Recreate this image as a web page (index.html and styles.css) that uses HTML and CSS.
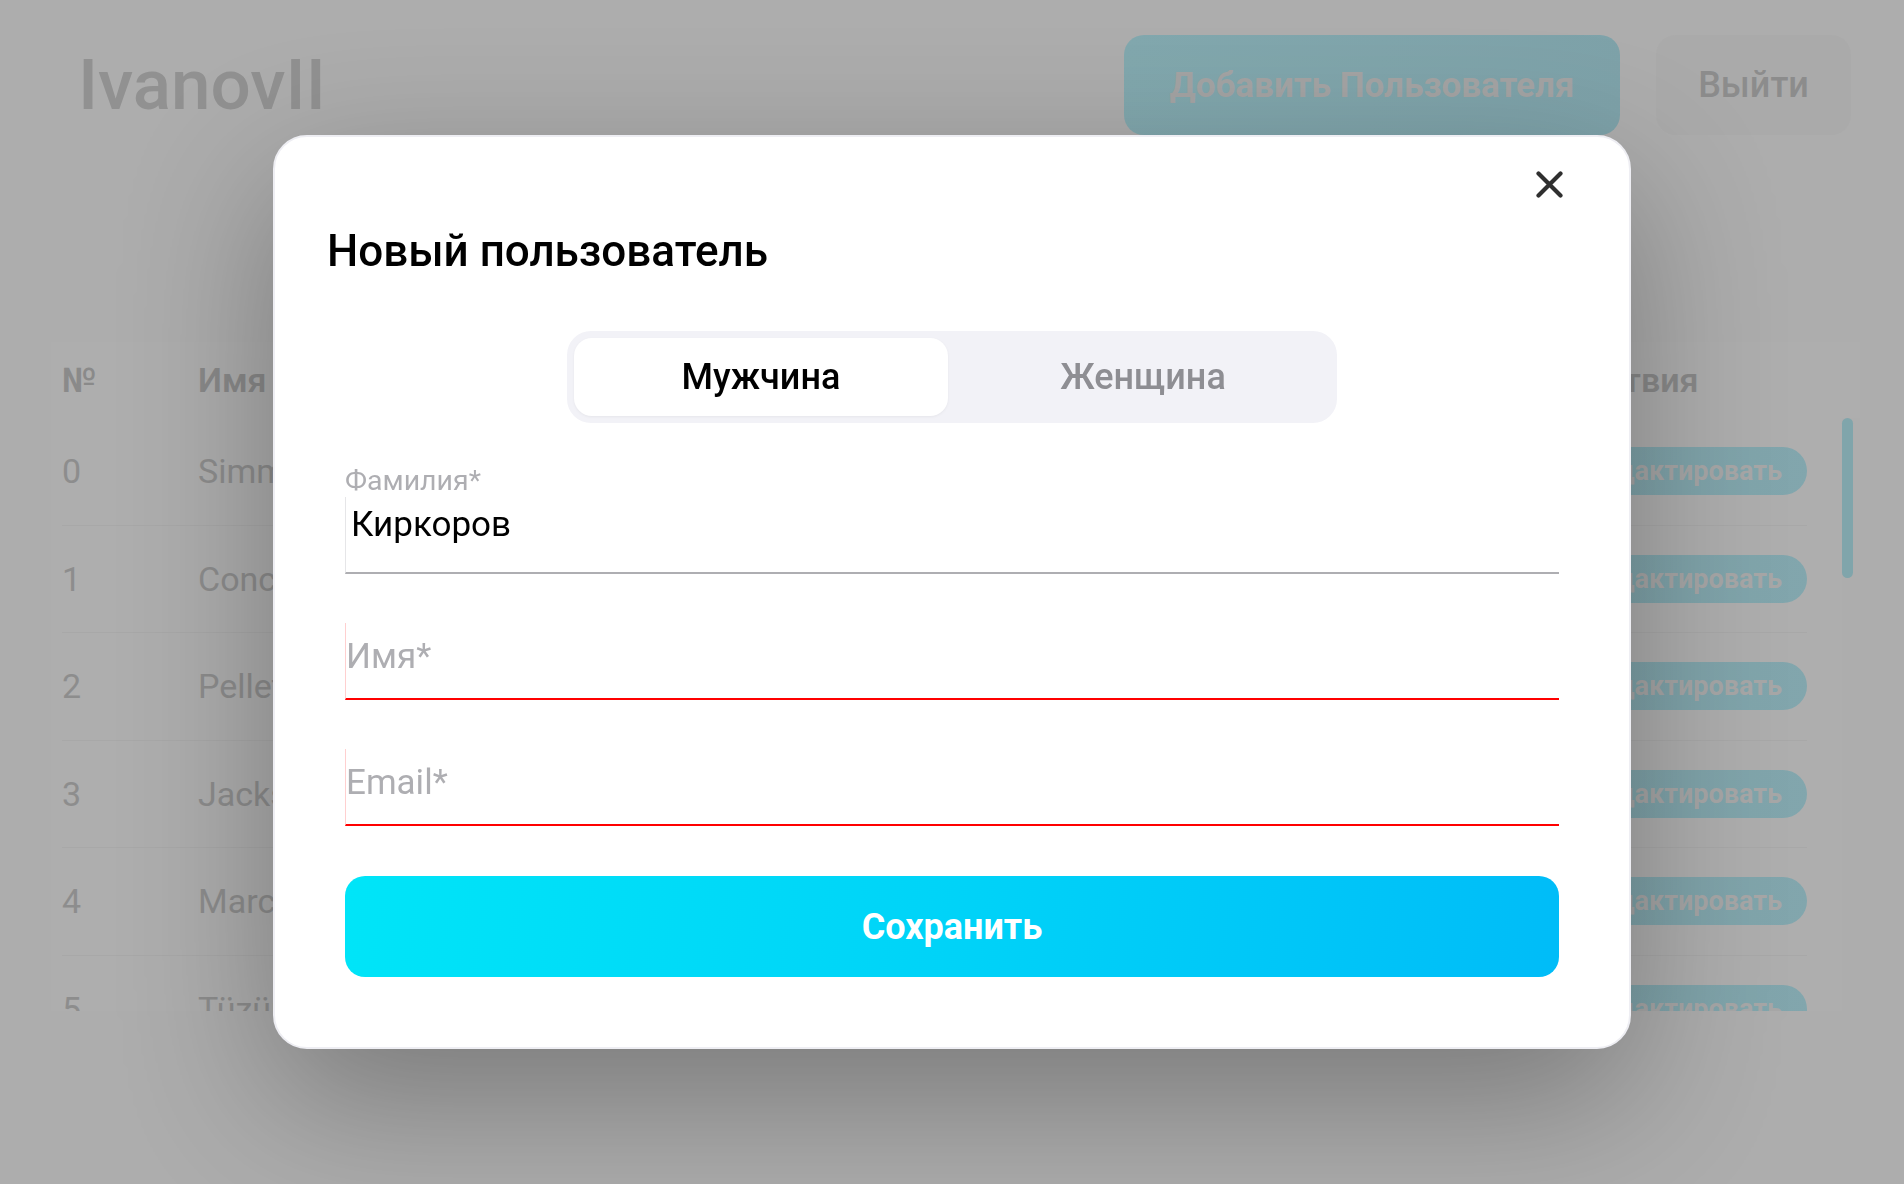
FILE: index.html
```html
<!DOCTYPE html>
<html lang="ru">
<head>
<meta charset="utf-8">
<title>Новый пользователь</title>
<link rel="stylesheet" href="styles.css">
</head>
<body>
<div class="page">
  <header class="topbar">
    <div class="logo">IvanovII</div>
    <div class="top-actions">
      <button class="btn-add">Добавить Пользователя</button>
      <button class="btn-logout">Выйти</button>
    </div>
  </header>

  <section class="table">
    <div class="thead">
      <div class="c-num">№</div>
      <div class="c-name">Имя</div>
      <div class="c-head-act">Действия</div>
    </div>
    <div class="tbody">
      <div class="rows">
        <div class="row"><div class="c-num">0</div><div class="c-name">Simmons</div><div class="c-act"><span class="btn-edit">Редактировать</span></div></div>
        <div class="row"><div class="c-num">1</div><div class="c-name">Concepcion</div><div class="c-act"><span class="btn-edit">Редактировать</span></div></div>
        <div class="row"><div class="c-num">2</div><div class="c-name">Pelletier</div><div class="c-act"><span class="btn-edit">Редактировать</span></div></div>
        <div class="row"><div class="c-num">3</div><div class="c-name">Jackson</div><div class="c-act"><span class="btn-edit">Редактировать</span></div></div>
        <div class="row"><div class="c-num">4</div><div class="c-name">Marcus</div><div class="c-act"><span class="btn-edit">Редактировать</span></div></div>
        <div class="row"><div class="c-num">5</div><div class="c-name">Tüzün</div><div class="c-act"><span class="btn-edit">Редактировать</span></div></div>
      </div>
      <div class="track"><div class="thumb"></div></div>
    </div>
  </section>
</div>

<div class="overlay">
  <div class="modal">
    <button class="close" aria-label="Закрыть">
      <svg width="27" height="27" viewBox="0 0 27 27"><path d="M2.5 2.5L24.5 24.5M24.5 2.5L2.5 24.5" stroke="#2f2f2f" stroke-width="4.2" stroke-linecap="round"/></svg>
    </button>
    <h2 class="title">Новый пользователь</h2>
    <div class="form">
      <div class="segmented">
        <div class="seg seg-active">Мужчина</div>
        <div class="seg">Женщина</div>
      </div>

      <div class="field field-first">
        <div class="label">Фамилия*</div>
        <input class="input input-filled" type="text" value="Киркоров">
      </div>
      <div class="field">
        <input class="input input-error" type="text" placeholder="Имя*">
      </div>
      <div class="field">
        <input class="input input-error" type="text" placeholder="Email*">
      </div>

      <button class="save">Сохранить</button>
    </div>
  </div>
</div>
</body>
</html>
```

FILE: styles.css
```css
* { box-sizing: border-box; }

html, body {
  margin: 0;
  height: 100%;
}

body {
  background: #adadad;
  font-family: Roboto, "Noto Sans", "Liberation Sans", sans-serif;
  overflow: hidden;
}

button {
  font-family: inherit;
  border: none;
  cursor: pointer;
}

/* ---------- background page (already dimmed) ---------- */
.page {
  padding: 35px 44px 0 51px;
}

.topbar {
  display: flex;
  justify-content: space-between;
  align-items: center;
  padding: 0 9px 0 27px;
}

.logo {
  font-size: 71px;
  font-weight: 500;
  line-height: 100px;
  color: #919191;
}

.top-actions {
  display: flex;
  gap: 36px;
}

.btn-add {
  width: 496px;
  height: 100px;
  border-radius: 20px;
  background: linear-gradient(100deg, #82a8ae, #7ea2a9);
  color: #a4a4a4;
  font-size: 35px;
  font-weight: 700;
}

.btn-logout {
  width: 195px;
  height: 100px;
  border-radius: 20px;
  background: #aaaaaa;
  color: #8c8c8c;
  font-size: 36px;
  font-weight: 500;
}

.table {
  margin-top: 207px;
}

.thead {
  display: flex;
  align-items: center;
  height: 76px;
  padding: 0 53px 0 11px;
  background: rgba(255, 255, 255, 0.025);
  font-size: 34px;
  font-weight: 600;
  color: #8a8a8a;
}

.c-num { width: 136px; flex: none; }
.c-name { flex: 1; min-width: 0; }
.c-head-act { width: 264px; flex: none; }
.c-act { flex: none; display: flex; }

.tbody {
  display: flex;
  height: 593px;
  overflow: hidden;
}

.rows {
  flex: 1;
  padding: 0 35px 0 11px;
  background: rgba(255, 255, 255, 0.02);
}

.row {
  display: flex;
  align-items: center;
  height: 107.5px;
  border-bottom: 1px solid rgba(0, 0, 0, 0.03);
  font-size: 34px;
  color: #8d8d8d;
}

.btn-edit {
  height: 48px;
  line-height: 48px;
  padding: 0 25px;
  border-radius: 24px;
  background: linear-gradient(100deg, #7ea2a8, #82a6ad);
  color: #a7a7a7;
  font-size: 27px;
  font-weight: 700;
  white-space: nowrap;
}

.track {
  width: 18px;
}

.thumb {
  width: 11px;
  height: 160px;
  border-radius: 6px;
  background: #80a5ab;
}

/* ---------- modal ---------- */
.overlay {
  position: fixed;
  inset: 0;
  display: flex;
  align-items: center;
  justify-content: center;
}

.modal {
  position: relative;
  width: 1358px;
  height: 914px;
  padding: 86px 70px 70px 52px;
  background: #ffffff;
  border: 2px solid #eeeef3;
  border-radius: 34px;
  box-shadow: 0 50px 150px rgba(0, 0, 0, 0.3);
}

.close {
  position: absolute;
  top: 34px;
  right: 66px;
  width: 27px;
  height: 27px;
  padding: 0;
  background: none;
  display: flex;
}

.title {
  margin: 0;
  font-size: 44px;
  font-weight: 500;
  line-height: 56px;
  color: #000;
}

.form {
  margin-left: 18px;
  display: flex;
  flex-direction: column;
}

.segmented {
  align-self: center;
  margin-top: 52px;
  width: 770px;
  padding: 7px;
  display: flex;
  gap: 8px;
  background: #f2f2f7;
  border-radius: 24px;
}

.seg {
  flex: 1;
  height: 78px;
  border-radius: 18px;
  display: flex;
  align-items: center;
  justify-content: center;
  font-size: 36px;
  font-weight: 500;
  color: #8e8e93;
}

.seg-active {
  background: #fff;
  color: #000;
  box-shadow: 0 1px 3px rgba(0, 0, 0, 0.05);
}

.field {
  margin-top: 49px;
  display: flex;
  flex-direction: column;
}

.field-first {
  margin-top: 41px;
}

.label {
  font-size: 28.5px;
  line-height: 33px;
  color: #aeaeb2;
}

.input {
  width: 100%;
  height: 77px;
  margin: 0;
  padding: 0 0 8px 0;
  border: none;
  border-left: 1px solid #ffd0d0;
  border-bottom: 2px solid #ff0000;
  outline: none;
  background: transparent;
  font-family: inherit;
  font-size: 35px;
  color: #000;
}

.input::placeholder {
  color: #aeaeb2;
  opacity: 1;
}

.input-filled {
  padding: 0 0 21px 5px;
  border-left-color: #e6e6e8;
  border-bottom-color: #aeaeb2;
}

.save {
  margin-top: 50px;
  height: 101px;
  border-radius: 20px;
  background: linear-gradient(100deg, #00e5f8 0%, #00d3f8 50%, #00bcf8 100%);
  color: #fff;
  font-size: 36px;
  font-weight: 700;
}
```
